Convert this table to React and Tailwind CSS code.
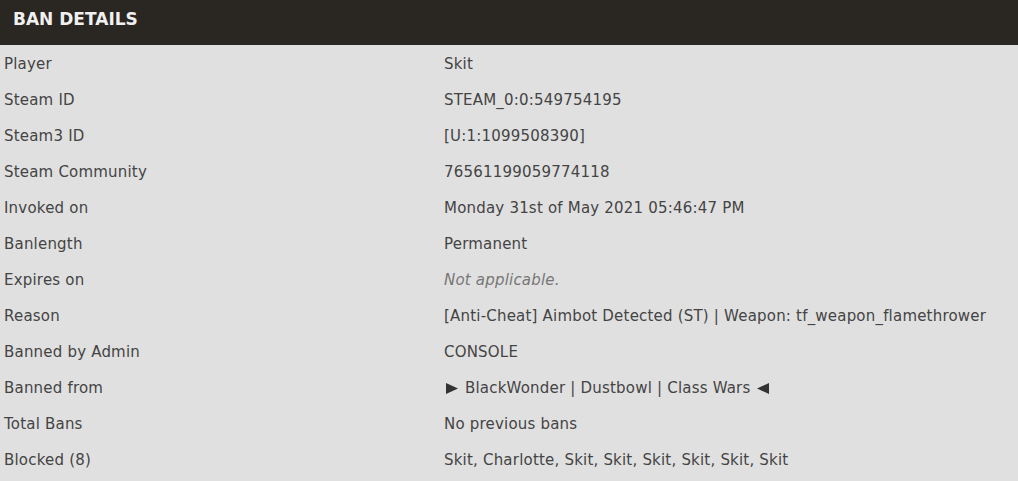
export default function App() {
  const rows = [
    ['Player', 'Skit'],
    ['Steam ID', 'STEAM_0:0:549754195'],
    ['Steam3 ID', '[U:1:1099508390]'],
    ['Steam Community', '76561199059774118'],
    ['Invoked on', 'Monday 31st of May 2021 05:46:47 PM'],
    ['Banlength', 'Permanent'],
    ['Expires on', null],
    ['Reason', '[Anti-Cheat] Aimbot Detected (ST) | Weapon: tf_weapon_flamethrower'],
    ['Banned by Admin', 'CONSOLE'],
    ['Banned from', 'servers'],
    ['Total Bans', 'No previous bans'],
    ['Blocked (8)', 'Skit, Charlotte, Skit, Skit, Skit, Skit, Skit, Skit'],
  ];
  return (
    <div className="w-[1018px] h-[481px] bg-[#e0e0e0] font-['Verdana','DejaVu_Sans',sans-serif] text-[15px] tracking-[0.2px] text-[#444] overflow-hidden">
      {/* Header */}
      <div className="h-[45px] bg-[#2a2622] px-[13px] pt-[8px]">
        <h3 className="text-[#f0f0f0] font-bold text-[17px] leading-[22px] tracking-normal">BAN DETAILS</h3>
      </div>
      <table className="w-full border-collapse">
        <tbody>
          {rows.map(([label, value]) => (
            <tr key={label} className="h-[36px]">
              <td className="w-[440px] pl-[4px] pt-[3px] align-middle">{label}</td>
              <td className="pl-[4px] pt-[3px] align-middle">
                {value === null ? (
                  <i className="text-[#777]">Not applicable.</i>
                ) : value === 'servers' ? (
                  <span className="inline-flex items-center">
                    <svg width="12" height="11" viewBox="0 0 12 11" className="ml-[2px] mr-[7px]">
                      <path d="M0 0 L12 5.5 L0 11 Z" fill="#333" />
                    </svg>
                    BlackWonder | Dustbowl | Class Wars
                    <svg width="12" height="11" viewBox="0 0 12 11" className="ml-[7px]">
                      <path d="M12 0 L0 5.5 L12 11 Z" fill="#333" />
                    </svg>
                  </span>
                ) : (
                  value
                )}
              </td>
            </tr>
          ))}
        </tbody>
      </table>
    </div>
  );
}
